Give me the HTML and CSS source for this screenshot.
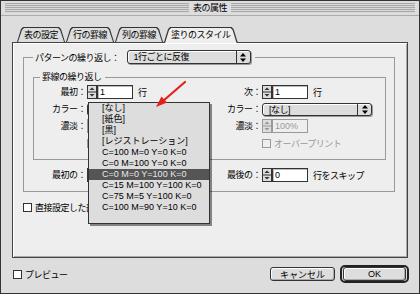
FILE: index.html
```html
<!DOCTYPE html>
<html lang="ja">
<head>
    <meta charset="UTF-8">
    <meta name="viewport" content="width=device-width, initial-scale=1.0">
    <title>表の属性</title>
    <link rel="stylesheet" href="styles.css">
</head>
<body>

<svg class="defs" width="0" height="0">
    <symbol id="spin" viewBox="0 0 10 14">
        <rect x=".5" y=".5" width="9" height="13" fill="#ddd" stroke="currentColor"/>
        <path d="M1 7h8" stroke="currentColor"/>
        <path d="M5 2.5 7.5 5h-5zM5 11.5 2.5 9h5z" fill="currentColor"/>
    </symbol>
    <symbol id="updown" viewBox="0 0 6 9">
        <path d="M3 0 6 3.5H0zM3 9 0 5.5h6z" fill="#000"/>
    </symbol>
</svg>

<div class="window">
    <div class="titlebar">
        <div class="stripes"><span class="title">表の属性</span></div>
    </div>

    <div class="tabs">
        <div class="tab">表の設定</div>
        <div class="tab">行の罫線</div>
        <div class="tab">列の罫線</div>
        <div class="tab active">塗りのスタイル</div>
    </div>

    <div class="panel">
        <fieldset class="group outer">
            <legend>
                <span>パターンの繰り返し：</span>
                <div class="popup pattern"><span class="popup-text">1行ごとに反復</span><span class="popup-arrows"><svg width="6" height="9"><use href="#updown"/></svg></span></div>
            </legend>

            <fieldset class="group inner">
                <legend>罫線の繰り返し</legend>
                <div class="grid">
                    <span class="lbl">最初：</span>
                    <div class="ctl"><svg class="spin"><use href="#spin"/></svg><input class="field" type="text" value="1"><span class="unit">行</span></div>
                    <span class="lbl">次：</span>
                    <div class="ctl"><svg class="spin"><use href="#spin"/></svg><input class="field" type="text" value="1"><span class="unit">行</span></div>

                    <span class="lbl">カラー：</span>
                    <div class="ctl"><div class="popup color"><span class="popup-text">[なし]</span><span class="popup-arrows"><svg width="6" height="9"><use href="#updown"/></svg></span></div></div>
                    <span class="lbl">カラー：</span>
                    <div class="ctl"><div class="popup color"><span class="popup-text">[なし]</span><span class="popup-arrows"><svg width="6" height="9"><use href="#updown"/></svg></span></div></div>

                    <span class="lbl">濃淡：</span>
                    <div class="ctl off"><svg class="spin"><use href="#spin"/></svg><input class="field" type="text" value="100%" disabled></div>
                    <span class="lbl">濃淡：</span>
                    <div class="ctl off"><svg class="spin"><use href="#spin"/></svg><input class="field" type="text" value="100%" disabled></div>

                    <span></span>
                    <div class="ctl off"><span class="box"></span><span class="box-text">オーバープリント</span></div>
                    <span></span>
                    <div class="ctl off"><span class="box"></span><span class="box-text">オーバープリント</span></div>
                </div>
            </fieldset>

            <div class="grid skip">
                <span class="lbl">最初の：</span>
                <div class="ctl"><svg class="spin"><use href="#spin"/></svg><input class="field" type="text" value="0"><span class="unit">行をスキップ</span></div>
                <span class="lbl">最後の：</span>
                <div class="ctl"><svg class="spin"><use href="#spin"/></svg><input class="field" type="text" value="0"><span class="unit">行をスキップ</span></div>
            </div>
        </fieldset>

        <div class="check local"><span class="box"></span><span class="box-text">直接設定した部分を保持</span></div>
    </div>

    <div class="footer">
        <div class="check"><span class="box"></span><span class="box-text">プレビュー</span></div>
        <div class="buttons">
            <button class="btn cancel">キャンセル</button>
            <div class="default"><button class="btn ok">OK</button></div>
        </div>
    </div>

    <!-- open color popup -->
    <ul class="menu">
        <li>[なし]</li>
        <li>[紙色]</li>
        <li>[黒]</li>
        <li>[レジストレーション]</li>
        <li>C=100 M=0 Y=0 K=0</li>
        <li>C=0 M=100 Y=0 K=0</li>
        <li class="hot">C=0 M=0 Y=100 K=0</li>
        <li>C=15 M=100 Y=100 K=0</li>
        <li>C=75 M=5 Y=100 K=0</li>
        <li>C=100 M=90 Y=10 K=0</li>
    </ul>

    <svg class="pointer" width="420" height="294">
        <path d="M184 81 162 100" stroke="#e3211b" stroke-width="2.2" stroke-linecap="round"/>
        <path d="M155 106 166 101.5 160.5 95.5z" fill="#e3211b"/>
    </svg>
</div>

</body>
</html>
```

FILE: styles.css
```css
* {
    box-sizing: border-box;
}
body {
    margin: 0;
    font-family: "Liberation Sans", "Noto Sans CJK JP", sans-serif;
    font-size: 9px;
    color: #000;
    letter-spacing: -0.5px;
}
.defs {
    position: absolute;
}
.window {
    position: relative;
    width: 420px;
    height: 294px;
    border: 1px solid #333;
    background: #ddd;
}
.titlebar {
    height: 15px;
    padding: 2px 4px 0;
    border-bottom: 1px solid #aaa;
}
.stripes {
    display: flex;
    justify-content: center;
    height: 10px;
    background: repeating-linear-gradient(#a8a8a8 0 1px, #d8d8d8 1px 2px);
}
.title {
    background: #ddd;
    padding: 0 4px;
    line-height: 10px;
}

/* tabs */
.tabs {
    position: relative;
    z-index: 1;
    display: flex;
    gap: 1px;
    height: 15px;
    margin: 11px 0 0 16px;
}
.tab {
    position: relative;
    z-index: 0;
    height: 15px;
    padding: 0 7px;
    line-height: 16px;
}
.tab::before,
.tab::after {
    content: "";
    position: absolute;
    z-index: -1;
    clip-path: polygon(0 100%, 4px 2px, 6px 0, calc(100% - 6px) 0, calc(100% - 4px) 2px, 100% 100%);
}
.tab::before {
    inset: 0;
    background: #333;
}
.tab::after {
    inset: 1px 1px 0;
    background: #ddd;
}
.tab.active::after {
    bottom: -1px;
    background: #eee;
}

/* panel */
.panel {
    height: 216px;
    margin: 0 11px;
    padding: 7px 12px 0 10px;
    border: 1px solid #444;
    background: #eee;
    box-shadow: inset 1px 1px #fff, inset -1px -1px #aaa;
}
.group {
    min-width: 0;
    margin: 0;
    padding: 0;
    border: 1px solid #999;
}
.outer {
    padding-bottom: 9px;
}
.outer > legend {
    display: flex;
    align-items: center;
    height: 14px;
    margin-left: 9px;
    padding: 0 4px 0 2px;
}
.inner {
    margin: 7px 8px 0 9px;
    padding: 2px 0 9px;
}
.inner > legend {
    margin-left: 6px;
    padding: 0 3px 0 2px;
    line-height: 12px;
}
.grid {
    display: grid;
    grid-template-columns: 53px 120px 55px 1fr;
    grid-auto-rows: 14px;
    row-gap: 3px;
    align-items: center;
}
.skip {
    margin-top: 8px;
    padding-left: 10px;
}
.lbl {
    text-align: right;
    padding-right: 1px;
    line-height: 14px;
}
.ctl {
    display: flex;
    align-items: center;
    height: 14px;
    color: #333;
}
.ctl.off {
    color: #999;
}
.spin {
    width: 10px;
    height: 14px;
    flex: none;
}
.field {
    width: 36px;
    height: 14px;
    margin: 0;
    padding: 0 2px;
    border: 1px solid #333;
    background: #fff;
    font: inherit;
    letter-spacing: 0;
    color: #000;
    box-shadow: inset 1px 1px #bbb;
}
.field:disabled {
    border-color: #999;
    background: #eee;
    color: #999;
    box-shadow: none;
}
.unit {
    margin-left: 5px;
    color: #000;
}

/* popups */
.popup {
    display: flex;
    height: 14px;
    border: 1px solid #333;
    border-radius: 3px;
    background: #ddd;
    box-shadow: 1px 1px 0 #999, inset 1px 1px #fff;
    color: #000;
}
.pattern {
    width: 124px;
    margin-left: 7px;
}
.color {
    width: 110px;
    height: 13px;
}
.popup-text {
    flex: 1;
    padding-left: 6px;
    line-height: 12px;
}
.popup-arrows {
    display: flex;
    align-items: center;
    justify-content: center;
    width: 14px;
    border-left: 1px solid #333;
}

/* checkboxes */
.box {
    width: 9px;
    height: 9px;
    flex: none;
    border: 1px solid currentColor;
    background: #fff;
}
.off .box {
    background: #eee;
}
.box-text {
    margin-left: 3px;
}
.check {
    display: flex;
    align-items: center;
    height: 10px;
    color: #000;
}
.check .box {
    border-color: #333;
}
.local {
    margin-top: 10px;
}

/* footer */
.footer {
    display: flex;
    align-items: center;
    justify-content: space-between;
    height: 35px;
    padding: 0 10px 3px 12px;
}
.buttons {
    display: flex;
    align-items: center;
    gap: 5px;
}
.btn {
    height: 14px;
    margin: 0;
    padding: 0;
    border: 1px solid #333;
    border-radius: 3px;
    background: #ddd;
    box-shadow: inset 1px 1px #fff, inset -1px -1px #aaa;
    font: inherit;
    color: #000;
}
.cancel {
    width: 65px;
}
.default {
    padding: 0 1px;
    border: 2px solid #222;
    border-radius: 5px;
}
.ok {
    display: block;
    width: 63px;
    letter-spacing: 0;
}

/* open popup menu */
.menu {
    position: absolute;
    left: 87px;
    top: 101px;
    width: 122px;
    height: 122px;
    margin: 0;
    padding: 0;
    list-style: none;
    border: 1px solid #333;
    background: #ddd;
    box-shadow: 2px 2px 0 rgba(0, 0, 0, 0.45);
    letter-spacing: 0;
}
.menu li {
    height: 11px;
    padding-left: 13px;
    line-height: 11px;
    white-space: nowrap;
}
.menu li.hot {
    background: #555;
    color: #e8e8e8;
}
.pointer {
    position: absolute;
    left: 0;
    top: 0;
    pointer-events: none;
}
```
